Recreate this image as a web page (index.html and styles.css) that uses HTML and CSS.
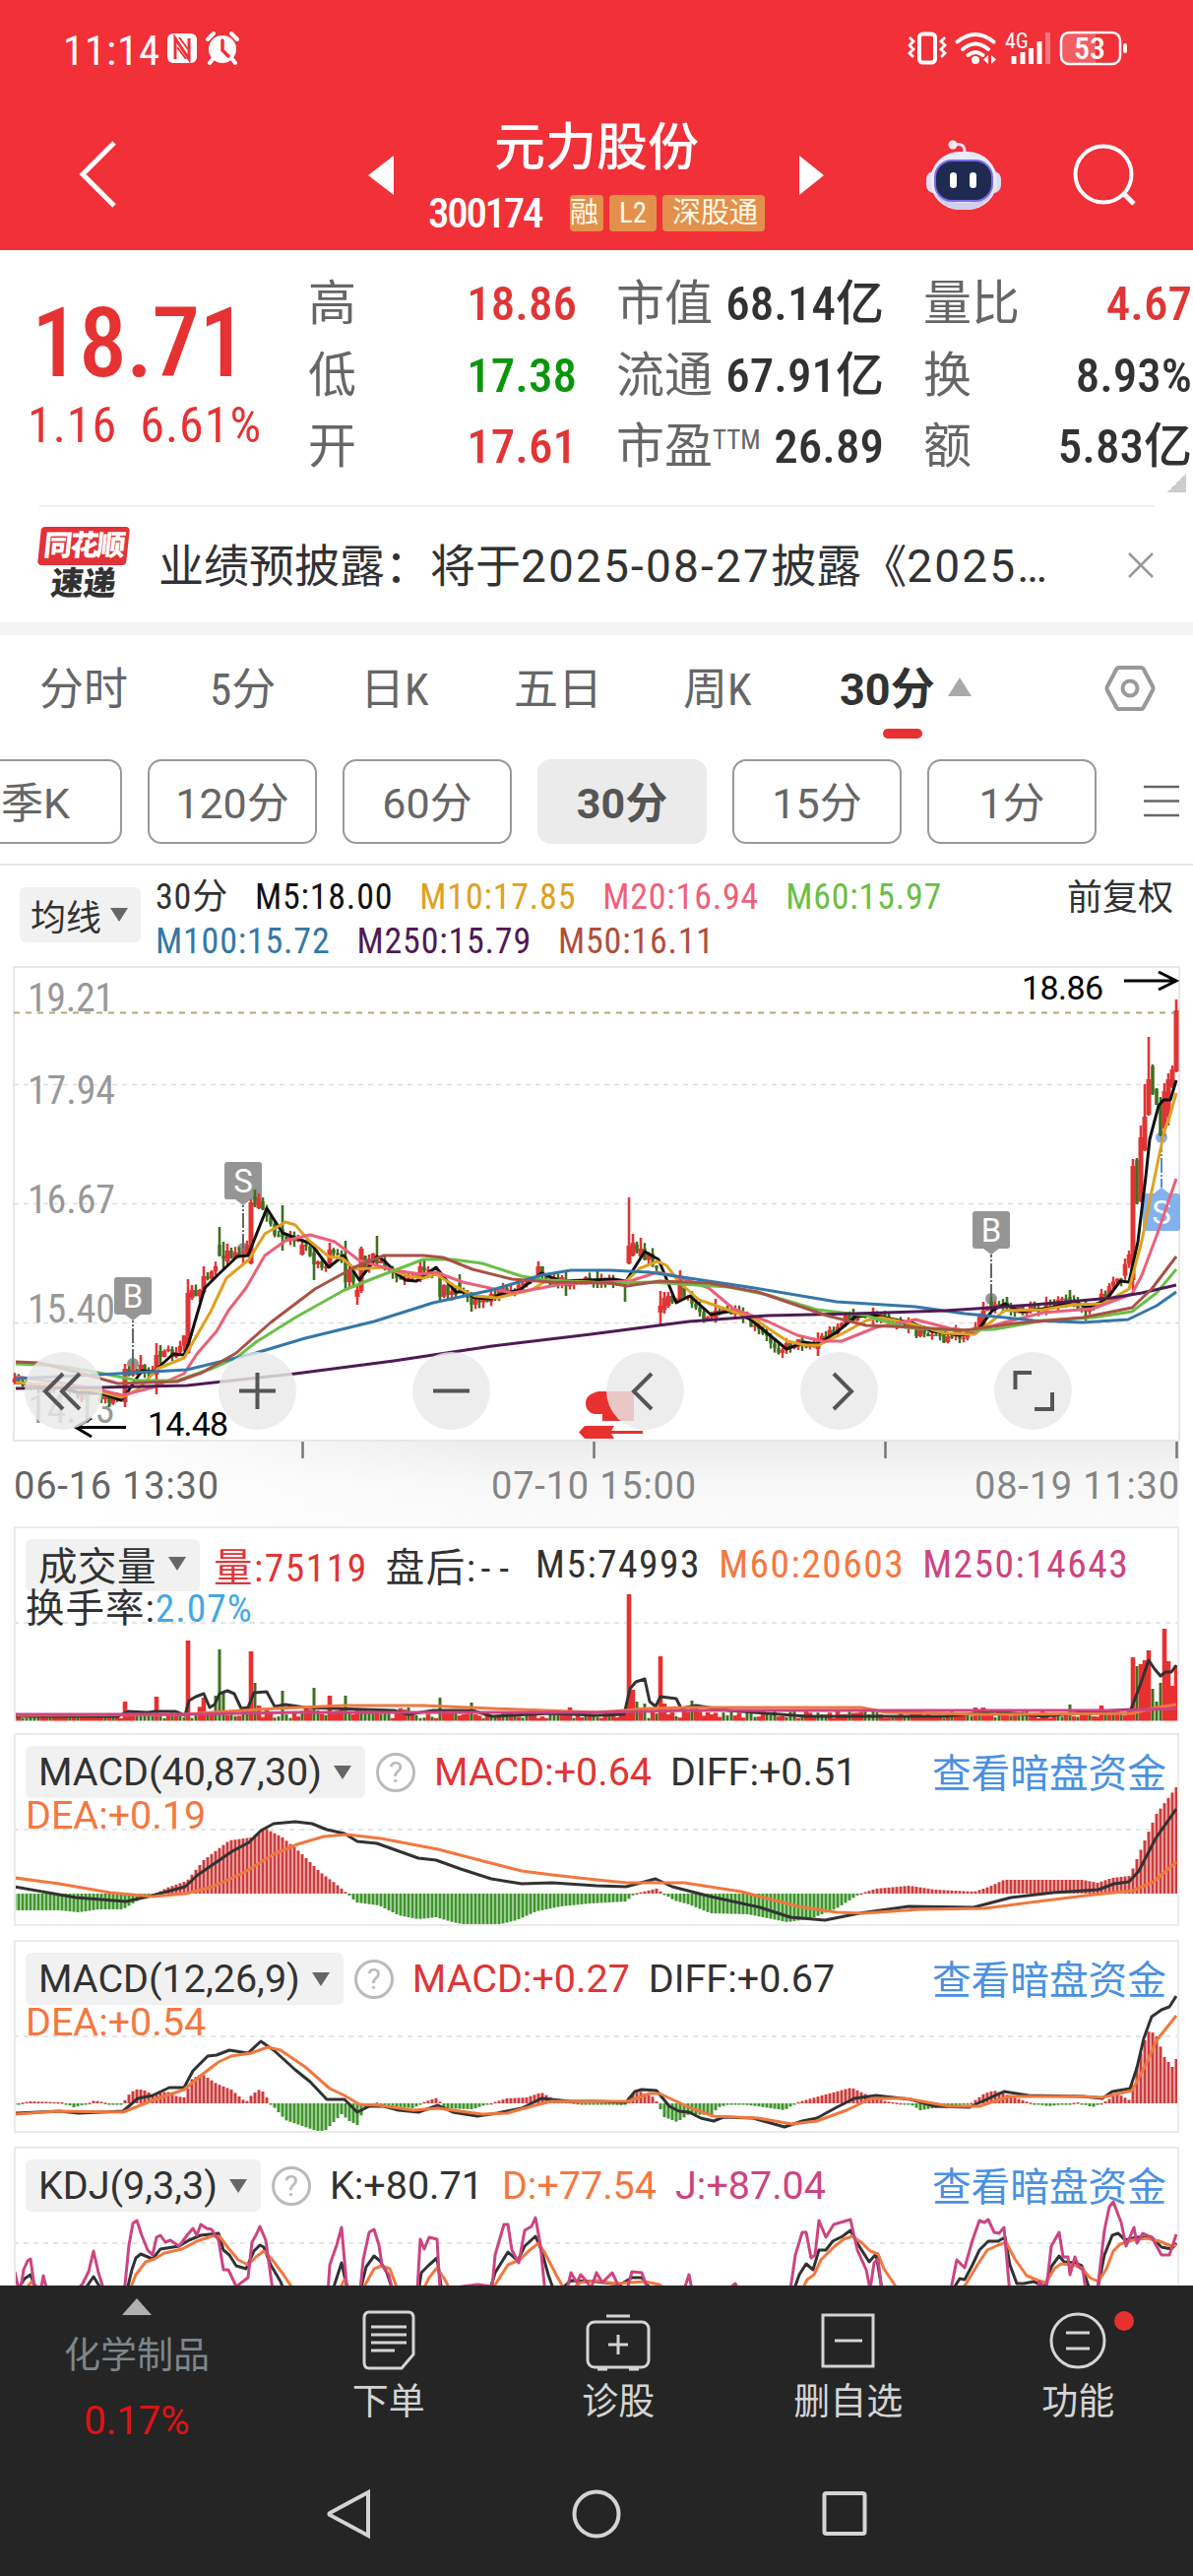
FILE: index.html
```html
<!DOCTYPE html>
<html lang="zh-CN">

<head>
  <meta charset="UTF-8">
  <meta name="viewport" content="width=device-width, initial-scale=1.0">
  <title>元力股份 300174</title>
  <link rel="stylesheet" href="styles.css">
</head>

<body>
  <header class="header">
    <div class="status">
      <span class="time">11:14</span>
      <svg class="nfc" width="30" height="32" viewBox="0 0 30 32">
        <rect x="0" y="1" width="30" height="30" rx="6" fill="#fff" />
        <path d="M8 27V6l14 21V6" fill="none" stroke="#f13037" stroke-width="3" />
        <path d="M10 15l9 12M12 5l9 12" stroke="#f13037" stroke-width="2" />
      </svg>
      <svg class="alarm" width="34" height="34" viewBox="0 0 34 34">
        <circle cx="17" cy="18" r="14" fill="#fff" />
        <path d="M2 8l6-6M32 8l-6-6M7 28l-3 4M27 28l3 4" stroke="#fff" stroke-width="4" stroke-linecap="round" />
        <path d="M17 9v10l6 6" fill="none" stroke="#f13037" stroke-width="3.500" stroke-linecap="round" />
      </svg>
      <svg class="signals" width="226" height="54" viewBox="920 22 226 54">
        <rect x="934" y="34.500" width="16" height="29" rx="3.500" fill="none" stroke="#fff" stroke-width="4" />
        <path d="M924 38l4 4-4 4 4 4-4 4 4 4M960 38l-4 4 4 4-4 4 4 4-4 4" fill="none" stroke="#fff" stroke-width="2.800" />
        <path d="M972.500 42.500q18.500-15 37 0M978 50q13-11 26 0M983.500 56q7.500-6 15 0" fill="none" stroke="#fff" stroke-width="4" stroke-linecap="round" />
        <circle cx="991" cy="61" r="4" fill="#fff" />
        <path d="M1004 56v9l-5-4.500zM1007 56v9l5-4.500z" fill="#fff" />
        <text class="net" x="1021" y="49">4G</text>
        <path d="M1030 65V57M1039 65V53M1047.500 65V49M1056 65V42" stroke="#fff" stroke-width="5" />
        <path d="M1064.500 65V33" stroke="#fff" stroke-opacity=".35" stroke-width="5" />
        <path d="M1086 33h27v31h-27q-7 0-7-8V41q0-8 7-8z" fill="#fff" fill-opacity=".22" />
        <rect x="1078" y="33" width="60" height="32" rx="8" fill="none" stroke="#fff" stroke-width="2.500" />
        <rect x="1141" y="44" width="4" height="10" rx="2" fill="#fff" />
        <text class="battery" x="1091" y="60">53</text>
      </svg>
    </div>
    <div class="titlebar">
      <svg class="back" width="44" height="70" viewBox="0 0 44 70"><path d="M38 4L6 36l32 32" fill="none" stroke="#fff" stroke-width="5" /></svg>
      <svg class="prev" width="26" height="40" viewBox="0 0 26 40"><path d="M26 0v40L0 20z" fill="#fff" /></svg>
      <div class="title">
        <h1>元力股份</h1>
        <div class="code"><b>300174</b><i class="cut">融</i><i>L2</i><i class="last">深股通</i></div>
      </div>
      <svg class="next" width="26" height="40" viewBox="0 0 26 40"><path d="M0 0v40l25-20z" fill="#fff" /></svg>
      <svg class="robot" width="76" height="72" viewBox="0 0 76 72">
        <path d="M28 5q12-3 11 9" fill="none" stroke="#e9dff5" stroke-width="3" />
        <circle cx="27" cy="5" r="4.500" fill="#f5e8f5" />
        <rect x="0" y="32" width="76" height="22" rx="8" fill="#dfdcf3" />
        <rect x="4" y="12" width="68" height="59" rx="30" fill="#eceaf8" />
        <path d="M8 54q10 17 30 17t30-17q-12 10-30 10T8 54z" fill="#cfcdf0" />
        <rect x="9" y="21" width="58" height="41" rx="17" fill="#1e2a50" stroke="#7b6be6" stroke-width="2" />
        <rect x="24" y="33" width="7" height="16" rx="3.500" fill="#fff" />
        <rect x="44" y="33" width="7" height="16" rx="3.500" fill="#fff" />
      </svg>
      <svg class="search" width="66" height="66" viewBox="0 0 66 66"><circle cx="31" cy="32" r="28.500" fill="none" stroke="#fff" stroke-width="4" /><path d="M51 51l11 11" stroke="#fff" stroke-width="5" /></svg>
    </div>
  </header>

  <section class="quote">
    <div class="price">
      <div class="now">18.71</div>
      <div class="change"><span>1.16</span><span>6.61%</span></div>
    </div>
    <dl class="stats">
      <div><dt>高</dt><dd class="up">18.86</dd></div>
      <div><dt>市值</dt><dd>68.14亿</dd></div>
      <div><dt>量比</dt><dd class="up">4.67</dd></div>
      <div><dt>低</dt><dd class="down">17.38</dd></div>
      <div><dt>流通</dt><dd>67.91亿</dd></div>
      <div><dt>换</dt><dd>8.93%</dd></div>
      <div><dt>开</dt><dd class="up">17.61</dd></div>
      <div><dt>市盈<sup>TTM</sup></dt><dd>26.89</dd></div>
      <div><dt>额</dt><dd>5.83亿</dd></div>
    </dl>
    <span class="corner"></span>
  </section>

  <section class="news">
    <div class="logo"><b>同花顺</b><em>速递</em></div>
    <p>业绩预披露：将于<span>2025-08-27</span>披露《<span>2025…</span></p>
    <svg width="26" height="26" viewBox="0 0 26 26"><path d="M1 1l24 24M25 1L1 25" stroke="#999" stroke-width="2.500" /></svg>
  </section>

  <nav class="tabs">
    <a>分时</a><a>5分</a><a>日K</a><a>五日</a><a>周K</a><a class="on">30分</a>
    <svg width="52" height="48" viewBox="0 0 52 48"><path d="M15 3h22q2 0 3 2l9 17q1 2 0 4l-9 17q-1 2-3 2H15q-2 0-3-2L3 26q-1-2 0-4l9-17q1-2 3-2z" fill="none" stroke="#999" stroke-width="4" /><circle cx="26" cy="24" r="7.500" fill="none" stroke="#999" stroke-width="4" /></svg>
  </nav>
  <div class="periods">
    <button>季K</button><button>120分</button><button>60分</button><button class="on">30分</button><button>15分</button><button>1分</button>
    <svg width="36" height="34" viewBox="0 0 36 34"><path d="M0 2h36M0 16.500h36M0 31h36" stroke="#666" stroke-width="2.500" /></svg>
  </div>

  <section class="ma">
    <span class="chip">均线</span>
    <div class="legend">
      <p><span>30分</span><span class="m5">M5:18.00</span><span class="m10">M10:17.85</span><span class="m20">M20:16.94</span><span class="m60">M60:15.97</span></p>
      <p><span class="m100">M100:15.72</span><span class="m250">M250:15.79</span><span class="m50">M50:16.11</span></p>
    </div>
    <span class="adjust">前复权</span>
  </section>

  <section class="kline">
    <svg width="1212" height="576" viewBox="0 974 1212 576">
      <defs>
        <linearGradient id="shade" x1="0" x2="0" y1="0" y2="1">
          <stop offset="0" stop-color="#ececec" />
          <stop offset=".5" stop-color="#f8f8f8" />
          <stop offset="1" stop-color="#fbfbfb" />
        </linearGradient>
        <linearGradient id="fade" x1="0" x2="1" y1="0" y2="0">
          <stop offset="0" stop-color="#fff" />
          <stop offset="1" stop-color="#fff" stop-opacity="0" />
        </linearGradient>
      </defs>
      <rect x="100" y="1464" width="1098" height="86" fill="url(#shade)" />
      <rect x="100" y="1464" width="400" height="86" fill="url(#fade)" />
      <rect class="frame" x="14" y="982" width="1184" height="481" />
      <path class="grid" d="M14 1101.500H1198M14 1222.500H1198M14 1343.500H1198" />
      <path class="last-price" d="M14 1028.500H1198" />
      <g class="scale">
        <text x="28" y="1027" textLength="88">19.21</text>
        <text x="28" y="1120.500" textLength="89">17.94</text>
        <text x="28" y="1231.500" textLength="89">16.67</text>
        <text x="28" y="1342.500" textLength="89">15.40</text>
        <text x="28" y="1444.500" textLength="89">14.13</text>
      </g>
      <g id="marks"></g>
      <g id="candles"></g>
      <g id="averages"></g>
      <g fill="#e8302f">
        <path d="M608 1413H644v30H612v-7H604q-9-2-9-11t13-12z" />
        <path d="M588 1454.500l6-6.500h30l-3 5h32v3h-32l3 5h-30z" />
      </g>
      <path d="M128 1449.500H78M93 1440l-16 9.500 16 9.500M1142 996H1194M1177 987l18 9-18 9" fill="none" stroke="#000" stroke-width="3" />
      <g class="extreme">
        <text x="150" y="1458" textLength="82">14.48</text>
        <text x="1038" y="1015" textLength="83">18.86</text>
      </g>
      <g class="tool-bg">
        <circle cx="64.500" cy="1412.500" r="39.500" /><circle cx="261.500" cy="1412.500" r="39.500" /><circle cx="458.500" cy="1412.500" r="39.500" />
        <circle cx="655.500" cy="1412.500" r="39.500" /><circle cx="852.500" cy="1412.500" r="39.500" /><circle cx="1049.500" cy="1412.500" r="39.500" />
      </g>
      <path class="tool" d="M64 1395l-18 18 18 18M81 1395l-18 18 18 18M243 1412.500h37M261.500 1394v37M440 1412.500h37M662 1395l-18 18 18 18M847 1395l18 18-18 18M1031.500 1411v-17H1048M1069 1414v17H1051" />
      <path d="M307.500 1464v17M603.500 1464v17M899.500 1464v17M1195.500 1464v17" stroke="#777" stroke-width="2.500" />
      <g class="dates">
        <text class="first" x="14" y="1522" textLength="208">06-16 13:30</text>
        <text x="499" y="1522" textLength="208">07-10 15:00</text>
        <text x="990" y="1522" textLength="208">08-19 11:30</text>
      </g>
    </svg>
  </section>

  <section class="panel volume">
    <svg id="volume" width="1184" height="198" viewBox="14 1550 1184 198"></svg>
    <div class="info">
      <p><span class="chip">成交量</span><span class="up">量:75119</span><span class="after">盘后:<span>--</span></span><span>M5:74993</span><span class="orange">M60:20603</span><span class="pink">M250:14643</span></p>
      <p><span>换手率:<span class="sky">2.07%</span></span></p>
    </div>
  </section>
  <section class="panel">
    <svg id="macd1" width="1184" height="196" viewBox="14 1760 1184 196"></svg>
    <div class="info">
      <p><span class="chip">MACD(40,87,30)</span><span class="help">?</span><span class="up">MACD:+0.64</span><span>DIFF:+0.51</span><a>查看暗盘资金</a></p>
      <p><span class="orange">DEA:+0.19</span></p>
    </div>
  </section>
  <section class="panel">
    <svg id="macd2" width="1184" height="196" viewBox="14 1970 1184 196"></svg>
    <div class="info">
      <p><span class="chip">MACD(12,26,9)</span><span class="help">?</span><span class="up">MACD:+0.27</span><span>DIFF:+0.67</span><a>查看暗盘资金</a></p>
      <p><span class="orange">DEA:+0.54</span></p>
    </div>
  </section>
  <section class="panel kdj">
    <svg id="kdj" width="1184" height="141" viewBox="14 2180 1184 141"></svg>
    <div class="info">
      <p><span class="chip">KDJ(9,3,3)</span><span class="help">?</span><span>K:+80.71</span><span class="orange">D:+77.54</span><span class="pink">J:+87.04</span><a>查看暗盘资金</a></p>
    </div>
  </section>

  <footer class="footer">
    <div class="menu">
      <div class="sector"><span class="arrow"></span><span>化学制品</span><b>0.17%</b></div>
      <a><svg width="56" height="62" viewBox="0 0 56 62"><path d="M8 2h40q5 0 5 6v37l-12 14H8q-5 0-5-6V8q0-6 5-6z" /><path d="M10 17h36M10 25h36M10 33h36M10 41h24" /></svg>下单</a>
      <a><svg width="66" height="62" viewBox="0 0 66 62"><rect x="2" y="12" width="62" height="46" rx="7" /><path d="M21 6h24M23 35h20M33 25v20M12 60h10M44 60h10" /></svg>诊股</a>
      <a><svg width="56" height="62" viewBox="0 0 56 62"><rect x="2" y="5" width="51" height="52" /><path d="M14 31h28" /></svg>删自选</a>
      <a><svg width="58" height="62" viewBox="0 0 58 62"><circle cx="29" cy="31" r="27" /><path d="M17 23h24M17 39h24" /></svg>功能<span class="dot"></span></a>
    </div>
    <div class="system">
      <svg width="46" height="54" viewBox="0 0 46 54"><path d="M43 5v44L4 28q-1-1 0-2z" /></svg>
      <svg width="54" height="54" viewBox="0 0 54 54"><circle cx="27" cy="27" r="22.500" /></svg>
      <svg width="46" height="54" viewBox="0 0 46 54"><rect x="2.500" y="6" width="41" height="41" rx="2" /></svg>
    </div>
  </footer>

  <script src="chart.js"></script>
</body>

</html>
```

FILE: styles.css
```css
* {
  box-sizing: border-box;
}

body {
  margin: 0;
  width: 1212px;
  height: 2616px;
  overflow: hidden;
  background-color: #fff;
  color: #323232;
  font-family: Roboto, "Noto Sans CJK SC", sans-serif;
  font-stretch: 85%;
}

h1, p, dl, dd {
  margin: 0;
}

i, em {
  font-style: normal;
}

.up {
  color: #e03535;
}

.down {
  color: #0a960a;
}

.orange {
  color: #f4783f;
}

.pink {
  color: #cc4480;
}

.sky {
  color: #45a8e6;
}

.header {
  height: 254px;
  background-color: #f13037;
  color: #fff;
}

.status {
  display: flex;
  align-items: center;
  height: 98px;
  padding-left: 64px;
}

.time {
  width: 106px;
  padding-top: 3px;
  font-size: 43px;
  letter-spacing: .8px;
}

.alarm {
  margin-left: 9px;
}

.signals {
  margin-left: 677px;
}

.net {
  font-size: 22px;
  fill: #fff;
}

.battery {
  font-size: 32px;
  font-weight: 500;
  fill: #fff;
}

.titlebar {
  display: flex;
  align-items: center;
  height: 156px;
  padding-left: 78px;
}

.prev {
  margin-left: 252px;
  margin-top: 4px;
}

.title {
  width: 360px;
  margin: 0 26px;
  padding-left: 9px;
}

.title h1 {
  margin-top: -9px;
  padding-left: 67px;
  font-size: 52px;
  font-weight: 500;
  line-height: 84px;
  white-space: nowrap;
}

.code {
  display: flex;
  align-items: center;
  height: 37px;
  margin-top: 5px;
}

.code b {
  width: 144px;
  font-size: 43px;
  font-weight: 500;
  letter-spacing: -2.300px;
}

.code i {
  height: 37px;
  margin-right: 6px;
  padding: 0 10px;
  border-radius: 4px;
  background-color: #e3904c;
  color: #fff8e6;
  font-size: 29px;
  line-height: 36px;
  white-space: nowrap;
}

.code .cut {
  width: 34px;
  padding: 0;
}

.code .last {
  margin-right: 0;
  padding-right: 7px;
}

.next {
  margin-left: 0;
  margin-top: 4px;
}

.robot {
  margin-left: 103px;
  margin-top: 3px;
}

.search {
  margin-left: 73px;
  margin-top: 4px;
}

.quote {
  position: relative;
  display: flex;
  height: 261px;
  padding-top: 19px;
}

.quote::after {
  content: "";
  position: absolute;
  left: 40px;
  right: 40px;
  bottom: 0;
  border-bottom: 2px solid #eee;
}

.price {
  width: 313px;
  color: #e63232;
}

.now {
  padding: 18px 0 0 32px;
  font-size: 98px;
  font-weight: 500;
  line-height: 116px;
  letter-spacing: -1px;
}

.change {
  display: flex;
  gap: 23px;
  padding-left: 28px;
  font-size: 50px;
  line-height: 50px;
  letter-spacing: 1px;
}

.stats {
  flex: 1;
  display: grid;
  grid-template-columns: 273px 272px 273px;
  column-gap: 40px;
  grid-template-rows: repeat(3, 72.500px);
  font-size: 49px;
  line-height: 72px;
}

.stats div {
  display: flex;
  justify-content: space-between;
  white-space: nowrap;
}

.stats dt {
  color: #666;
}

.stats dd {
  font-weight: 500;
}

.stats sup {
  font-size: 27px;
  line-height: 0;
  vertical-align: 14px;
}

.corner {
  position: absolute;
  right: 7px;
  bottom: 15px;
  width: 19px;
  height: 19px;
  background: linear-gradient(135deg, transparent 50%, #ccc 50%);
}

.news {
  display: flex;
  align-items: center;
  height: 130px;
  padding: 0 40px;
  border-bottom: 13px solid #f4f4f4;
}

.logo {
  width: 121px;
}

.logo b, .logo em {
  display: block;
  width: 90px;
  transform: skewX(-6deg);
  font-size: 29px;
  font-weight: 900;
  line-height: 39px;
  text-align: center;
}

.logo b {
  border-radius: 4px;
  background-color: #e23238;
  color: #fff;
  letter-spacing: -2px;
}

.logo em {
  font-size: 33px;
  line-height: 38px;
}

.news p {
  width: 986px;
  padding-bottom: 6px;
  font-size: 46px;
  white-space: nowrap;
}

.news p span {
  font-stretch: 100%;
  letter-spacing: 2.200px;
}

.tabs {
  display: flex;
  align-items: center;
  height: 108px;
  padding-left: 40px;
  color: #666;
  font-size: 45px;
  white-space: nowrap;
}

.tabs a {
  padding-bottom: 5px;
}

.tabs a:nth-child(1) { width: 173px; }
.tabs a:nth-child(2) { width: 153px; }
.tabs a:nth-child(3) { width: 156px; }
.tabs a:nth-child(4) { width: 172px; }
.tabs a:nth-child(5) { width: 159px; }

.tabs .on {
  position: relative;
  width: 269px;
  color: #323232;
  font-stretch: 100%;
  font-weight: 700;
}

.tabs .on::before {
  content: "";
  position: absolute;
  left: 110px;
  top: 24px;
  border: 12px solid transparent;
  border-top-width: 0;
  border-bottom: 19px solid #aaa;
}

.tabs .on::after {
  content: "";
  position: absolute;
  left: 44px;
  top: 76px;
  width: 40px;
  height: 10px;
  border-radius: 5px;
  background-color: #e63232;
}

.periods {
  display: flex;
  align-items: center;
  gap: 26px;
  height: 126px;
  padding-bottom: 3px;
  margin-left: -48px;
  border-bottom: 2px solid #e8e8e8;
}

.periods button {
  flex: none;
  width: 172px;
  height: 86px;
  padding: 0 0 3px;
  border: 2px solid #999;
  border-radius: 14px;
  background-color: #fff;
  color: #666;
  font: inherit;
  font-size: 43px;
  font-stretch: 100%;
}

.periods button:first-child {
  padding-right: 4px;
}

.periods .on {
  border-color: #ebebeb;
  background-color: #ebebeb;
  color: #555;
  font-weight: 700;
}

.periods svg {
  margin-left: 22px;
}

.chip {
  display: inline-flex;
  align-items: center;
  border-radius: 6px;
  background-color: #f1f1f1;
  white-space: nowrap;
}

.chip::after {
  content: "";
  margin-left: 12px;
  border: 9px solid transparent;
  border-top: 14px solid #666;
  border-bottom-width: 0;
}

.ma {
  display: flex;
  height: 95px;
  padding-left: 20px;
  font-size: 36px;
}

.ma .chip {
  width: 123px;
  height: 56px;
  margin-top: 22px;
  padding-left: 11px;
}

.ma .chip::after {
  margin-left: 9px;
}

.legend {
  width: 941px;
  padding: 10px 0 0 15px;
  letter-spacing: .800px;
}

.legend p {
  display: flex;
  gap: 27px;
  line-height: 45px;
  white-space: nowrap;
}

.m5 { color: #111; }
.m10 { color: #e0a020; }
.m20 { color: #f06078; }
.m60 { color: #6abf47; }
.m100 { color: #3477a8; }
.m250 { color: #4f1a55; }
.m50 { color: #b04e3c; }

.adjust {
  padding-top: 11px;
  line-height: 45px;
}

.kline svg, .panel svg {
  display: block;
}

.kline {
  height: 576px;
}

.frame {
  fill: none;
  stroke: #e8e8e8;
  stroke-width: 2;
}

.grid {
  fill: none;
  stroke: #ddd;
  stroke-width: 1.500;
  stroke-dasharray: 5 5;
}

.last-price {
  stroke: #b3a878;
  stroke-width: 2;
  stroke-dasharray: 6 6;
}

.scale {
  fill: #999;
  font-size: 40px;
}

.extreme {
  fill: #000;
  font-size: 34px;
  font-stretch: 100%;
}

.dates {
  fill: #858585;
  font-size: 38px;
  font-stretch: 100%;
}

.dates .first {
  fill: #666;
}

.tool-bg {
  fill: #e9e9e9;
  fill-opacity: .82;
}

.tool {
  fill: none;
  stroke: #555;
  stroke-width: 4;
}

.flag {
  fill: #fff;
  font-size: 33px;
  font-stretch: 100%;
  text-anchor: middle;
}

.line {
  fill: none;
  stroke-width: 3;
  stroke-linejoin: round;
}

.panel {
  display: grid;
  width: 1184px;
  height: 196px;
  margin: 0 14px 14px;
  border: 2px solid #ebebeb;
  overflow: hidden;
}

.panel > * {
  grid-area: 1 / 1;
}

.panel svg {
  margin: -2px;
}

.volume {
  height: 198px;
  margin-bottom: 12px;
  border-bottom: 0;
}

.kdj {
  height: 141px;
  margin-bottom: 0;
  border-bottom: 0;
}

.info {
  z-index: 1;
  font-size: 39.500px;
  font-stretch: 100%;
}

.info p {
  display: flex;
  align-items: center;
  height: 53px;
  padding-left: 10px;
  white-space: nowrap;
}

.info p:first-child {
  gap: 19px;
  padding-top: 13px;
  height: 62px;
}

.info p + p {
  height: 38px;
}

.info .chip {
  height: 53px;
  margin-right: -8px;
  padding: 0 14px 0 13px;
}

.info .help {
  width: 40px;
  height: 40px;
  border: 3px solid #bbb;
  border-radius: 50%;
  color: #bbb;
  font-size: 30px;
  line-height: 34px;
  text-align: center;
}

.info a {
  margin-left: auto;
  margin-right: 11px;
  padding-bottom: 4px;
  color: #4a90e2;
  font-size: 39.700px;
}

.volume .info {
  font-stretch: 85%;
  letter-spacing: 1.500px;
}

.volume .info p:first-child {
  gap: 18px;
}

.volume .info .chip {
  margin-right: -4px;
  padding-bottom: 4px;
  letter-spacing: .5px;
}

.volume .info p > span {
  padding-bottom: 3px;
}

.volume .info p + p {
  height: 34px;
  letter-spacing: 1px;
}

.after > span {
  margin-left: 4px;
  letter-spacing: 9px;
}

.footer {
  height: 295px;
  background-color: #252525;
  color: #d4d4d4;
  font-size: 37px;
}

.menu {
  display: flex;
  height: 180px;
}

.menu a {
  position: relative;
  display: flex;
  flex: 1;
  flex-direction: column;
  align-items: center;
  padding-top: 25px;
  line-height: 64px;
}

.menu svg, .system svg {
  fill: none;
  stroke: #d4d4d4;
  stroke-width: 3;
}

.menu svg {
  flex: none;
}

.sector {
  display: flex;
  flex-direction: column;
  align-items: center;
  width: 278px;
  padding-top: 13px;
  color: #7d868c;
  line-height: 66px;
}

.sector .arrow {
  margin-bottom: 9px;
  border: 15px solid transparent;
  border-top-width: 0;
  border-bottom: 17px solid #b0b0b0;
}

.sector b {
  color: #e01212;
  font-size: 40px;
  font-stretch: 100%;
  font-weight: 400;
}

.dot {
  position: absolute;
  left: 153px;
  top: 26px;
  width: 20px;
  height: 20px;
  border-radius: 50%;
  background-color: #e93030;
}

.system {
  display: flex;
  justify-content: center;
  gap: 202px;
  padding-top: 25px;
}

.system svg {
  stroke-width: 4;
}
```

FILE: chart.js
```js
const STEP = 4
const LEFT = 16
const COUNT = 296
const RED = '#e03535'
const GREEN = '#3f7020'

// small deterministic generator, so that the chart is the same on each load
let seed = 7
function rand() {
  seed = (seed * 16807) % 2147483647
  return seed / 2147483647
}

function parse(s) {
  return s.trim().split(/\s+/).map(p => p.split(',').map(Number))
}

function at(points, x) {
  if (x <= points[0][0]) return points[0][1]
  for (let i = 1; i < points.length; i++) {
    const [x0, y0] = points[i - 1]
    const [x1, y1] = points[i]
    if (x <= x1) return y0 + (y1 - y0) * (x - x0) / (x1 - x0)
  }
  return points[points.length - 1][1]
}

function line(points, color) {
  return `<polyline class="line" stroke="${color}" points="${points.join(' ')}"/>`
}

function bar(x, y0, y1, w, color) {
  return `<rect x="${x - w / 2}" y="${Math.min(y0, y1)}" width="${w}" height="${Math.max(1.5, Math.abs(y1 - y0))}" fill="${color}"/>`
}

const ma = {
  m5: parse('16,1404 59,1409 80,1414 103,1415 123,1422 130,1413 144,1392 156,1393 176,1375 187,1376 192,1363 208,1308 221,1295 241,1276 252,1275 271,1227 287,1252 300,1257 316,1263 334,1287 349,1275 365,1300 383,1276 390,1280 403,1293 412,1300 423,1301 443,1287 463,1312 474,1312 482,1318 498,1319 510,1314 528,1310 550,1293 569,1301 623,1299 636,1301 655,1271 669,1279 687,1323 701,1316 722,1335 746,1331 764,1341 799,1370 817,1363 830,1365 850,1353 869,1337 889,1336 928,1344 947,1352 975,1356 992,1353 1008,1331 1021,1324 1037,1332 1068,1328 1092,1321 1103,1328 1123,1321 1138,1301 1147,1302 1156,1261 1164,1195 1168,1157 1177,1123 1182,1117 1189,1117 1195,1097'),
  m10: parse('16,1404 60,1407 100,1413 124,1419 140,1411 160,1390 187,1379 196,1363 214,1332 230,1298 253,1279 269,1253 290,1241 300,1244 313,1259 334,1276 348,1278 361,1289 390,1287 415,1296 430,1298 443,1294 462,1306 482,1316 505,1318 540,1310 556,1300 620,1303 636,1301 650,1288 668,1281 677,1285 690,1302 710,1320 745,1332 764,1338 800,1362 818,1366 832,1366 860,1352 880,1341 895,1338 925,1344 960,1354 990,1355 1010,1340 1020,1331 1060,1330 1090,1325 1120,1324 1147,1309 1160,1260 1170,1210 1183,1148 1188,1135 1195,1110'),
  m20: parse('16,1398 60,1404 100,1411 124,1417 155,1409 187,1395 200,1375 220,1352 232,1331 250,1308 269,1275 290,1260 315,1254 340,1261 365,1280 400,1290 428,1294 443,1292 470,1302 520,1313 550,1308 570,1304 620,1302 640,1301 668,1292 690,1297 720,1308 745,1329 780,1342 810,1356 835,1362 855,1362 890,1348 930,1340 965,1349 990,1352 1020,1343 1060,1333 1110,1329 1150,1314 1160,1295 1175,1255 1195,1197'),
  m60: parse('16,1385 60,1387 100,1394 140,1402 180,1402 215,1390 240,1379 260,1363 300,1338 350,1310 380,1298 430,1279 460,1279 490,1283 530,1296 560,1301 620,1303 660,1302 740,1307 780,1315 830,1330 880,1336 920,1348 970,1351 1010,1350 1060,1341 1110,1338 1150,1332 1175,1313 1195,1289'),
  m100: parse('16,1400 100,1396 190,1391 260,1374 310,1359 380,1342 440,1323 500,1310 550,1295 580,1290 620,1290 660,1292 760,1307 850,1322 930,1327 980,1334 1050,1341 1100,1343 1146,1340 1175,1326 1195,1312'),
  m250: parse('16,1410 100,1409 190,1407 300,1395 400,1382 500,1367 600,1355 700,1342 780,1336 870,1334 960,1331 1050,1325 1130,1318 1160,1313 1195,1305'),
  m50: parse('16,1383 40,1384 80,1394 120,1405 180,1403 205,1394 240,1374 275,1343 320,1309 360,1287 390,1275 430,1275 450,1277 480,1289 520,1299 560,1302 620,1303 637,1306 670,1301 720,1303 770,1312 840,1336 880,1346 930,1348 980,1351 1030,1344 1100,1338 1150,1328 1170,1309 1195,1276')
}

// x, high, open side, close side, low, rising
const bigCandles = [
  [127, 1385, 1390, 1424, 1429, 1], [143, 1376, 1386, 1394, 1396, 1],
  [159, 1364, 1376, 1396, 1416, 1], [163, 1366, 1372, 1378, 1385, 0],
  [191, 1299, 1313, 1374, 1375, 1], [195, 1305, 1310, 1318, 1320, 1],
  [207, 1286, 1296, 1312, 1314, 1], [223, 1246, 1264, 1275, 1276, 0],
  [227, 1261, 1275, 1278, 1288, 0], [231, 1263, 1270, 1281, 1284, 1],
  [255, 1218, 1221, 1283, 1284, 1], [259, 1208, 1215, 1224, 1226, 0],
  [263, 1212, 1217, 1227, 1228, 1], [267, 1216, 1220, 1228, 1229, 0],
  [287, 1224, 1248, 1256, 1270, 0], [307, 1259, 1264, 1274, 1275, 1],
  [319, 1264, 1272, 1284, 1300, 0], [335, 1262, 1269, 1286, 1288, 1],
  [351, 1260, 1276, 1302, 1311, 0], [363, 1306, 1310, 1317, 1325, 1],
  [367, 1266, 1268, 1311, 1313, 1], [383, 1255, 1275, 1283, 1286, 0],
  [427, 1281, 1286, 1300, 1302, 1], [431, 1278, 1287, 1290, 1293, 0],
  [447, 1294, 1297, 1317, 1320, 0], [467, 1294, 1303, 1310, 1312, 0],
  [479, 1312, 1316, 1325, 1332, 0], [547, 1281, 1286, 1297, 1299, 1],
  [575, 1291, 1300, 1306, 1316, 0], [607, 1291, 1300, 1304, 1308, 0],
  [635, 1300, 1303, 1307, 1322, 0], [639, 1216, 1265, 1283, 1284, 1],
  [643, 1253, 1262, 1275, 1276, 1], [647, 1261, 1264, 1271, 1273, 0],
  [651, 1257, 1268, 1276, 1278, 1], [671, 1311, 1326, 1333, 1345, 1],
  [675, 1312, 1318, 1330, 1334, 1], [679, 1312, 1316, 1326, 1328, 1],
  [691, 1290, 1297, 1320, 1322, 1], [695, 1303, 1308, 1317, 1318, 0],
  [727, 1319, 1331, 1338, 1343, 1], [831, 1353, 1360, 1370, 1377, 1],
  [867, 1329, 1334, 1341, 1343, 0], [887, 1328, 1333, 1339, 1345, 1],
  [931, 1345, 1346, 1357, 1359, 0], [959, 1351, 1354, 1363, 1364, 0],
  [999, 1322, 1331, 1348, 1350, 1], [1007, 1317, 1322, 1330, 1331, 0],
  [1023, 1317, 1322, 1328, 1332, 0], [1087, 1310, 1317, 1321, 1324, 0],
  [1103, 1321, 1326, 1332, 1341, 0], [1151, 1177, 1184, 1300, 1310, 1],
  [1155, 1176, 1178, 1222, 1223, 0], [1159, 1143, 1155, 1220, 1221, 1],
  [1163, 1101, 1134, 1168, 1169, 1], [1167, 1053, 1096, 1132, 1133, 1],
  [1171, 1081, 1083, 1111, 1112, 0], [1175, 1105, 1106, 1122, 1122, 0],
  [1179, 1114, 1120, 1153, 1154, 0], [1183, 1100, 1108, 1146, 1154, 1],
  [1187, 1090, 1096, 1134, 1143, 1], [1191, 1082, 1086, 1104, 1105, 1],
  [1195, 1015, 1026, 1088, 1089, 1]
]

function candles() {
  let out = ''
  let close = at(ma.m5, LEFT)
  for (let i = 0; i < COUNT; i++) {
    const x = 15 + i * STEP
    const big = bigCandles.find(c => c[0] === x)
    if (big) {
      const color = big[5] ? RED : GREEN
      out += bar(x, big[1], big[4], 2.6, color) + bar(x, big[2], big[3], big[5] ? 5 : 3.4, color)
      close = big[5] ? big[2] : big[3]
      continue
    }
    const next = at(ma.m5, x + 7) + (rand() - .5) * 10
    const rising = next <= close
    const color = rising ? RED : GREEN
    const open = Math.max(next - 12, Math.min(next + 12, close))
    out += bar(x, Math.min(open, next) - rand() * 6, Math.max(open, next) + rand() * 6, 2.4, color)
    out += bar(x, open, next, rising ? 4.6 : 3.4, color)
    close = next
  }
  return out
}

function flag(letter, x, y, tip, color) {
  const up = tip < y
  const edge = up ? y : y + 38
  const point = up ? y - 6 : y + 44
  return `<circle cx="${x}" cy="${tip}" r="6" fill="${color}"/>
    <path d="M${x} ${tip}V${point}" stroke="${up ? '#4a8de0' : '#666'}" stroke-width="2" stroke-dasharray="15 2 2 2"/>
    <path d="M${x - 8} ${edge}L${x} ${point}L${x + 8} ${edge}" fill="${color}"/>
    <rect x="${x - 19}" y="${y}" width="38" height="38" rx="3" fill="${color}"/>
    <text class="flag" x="${x}" y="${y + 31}">${letter}</text>`
}

document.getElementById('marks').innerHTML =
  flag('B', 135, 1297, 1385, '#959595') +
  flag('S', 247, 1180, 1268, '#959595') +
  flag('B', 1007, 1230, 1319, '#959595') +
  flag('S', 1180, 1212, 1155, '#82b1f0')
document.getElementById('candles').innerHTML = candles()
document.getElementById('averages').innerHTML =
  line(ma.m5, '#111') + line(ma.m10, '#e0a020') + line(ma.m20, '#ea6079') +
  line(ma.m60, '#6abf47') + line(ma.m100, '#3477a8') + line(ma.m250, '#4f1a55') + line(ma.m50, '#a85244')

// volume
const peaks = {
  127: [1728, 1], 159: [1723, 1], 191: [1666, 1], 207: [1724, 1], 219: [1722, 0], 223: [1675, 0], 227: [1718, 0],
  255: [1677, 1], 259: [1709, 0], 263: [1732, 1], 287: [1717, 0], 319: [1714, 0], 335: [1722, 1], 351: [1722, 0],
  415: [1734, 0], 447: [1724, 0], 479: [1729, 0], 543: [1735, 1], 579: [1734, 1], 639: [1619, 1], 643: [1716, 1], 647: [1728, 0],
  651: [1734, 1], 655: [1730, 0], 671: [1682, 1], 675: [1730, 1], 703: [1727, 0], 707: [1734, 1],
  991: [1734, 1], 999: [1734, 1], 1087: [1731, 0], 1119: [1732, 1],
  1151: [1683, 1], 1155: [1692, 0], 1159: [1690, 1], 1163: [1686, 1], 1167: [1676, 1], 1171: [1715, 0],
  1175: [1728, 0], 1179: [1709, 0], 1183: [1654, 1], 1187: [1687, 1], 1191: [1712, 1], 1195: [1691, 1]
}
let vol = '<path class="grid" d="M14 1648H1198"/>'
for (let i = 0; i < COUNT; i++) {
  const x = 15 + i * STEP
  const calm = x < 120 ? 5 : x > 200 && x < 420 ? 12 : 8
  const p = peaks[x] || [1747 - 2 - rand() * calm, rand() > .42]
  vol += bar(x, p[0], 1747.5, p[1] ? 4.6 : 3, p[1] ? '#e93030' : GREEN)
}
vol += line(parse('16,1743 120,1743 130,1738 150,1739 158,1738 178,1738 188,1742 192,1727 199,1723 207,1720 213,1734 218,1731 223,1720 231,1717 238,1720 245,1735 252,1734 258,1719 271,1718 279,1733 290,1731 310,1734 340,1735 400,1737 415,1741 440,1737 480,1737 500,1743 560,1740 606,1742 634,1741 640,1715 646,1708 655,1705 660,1728 666,1733 671,1723 687,1725 692,1735 707,1732 740,1737 820,1743 850,1743 910,1743 960,1743 1010,1738 1060,1743 1100,1739 1149,1736 1158,1712 1167,1686 1173,1695 1179,1702 1184,1698 1190,1698 1195,1691'), '#323232')
vol += line(parse('16,1742 187,1741 230,1738 280,1735 350,1732 430,1732 500,1735 606,1739 660,1735 700,1734 875,1734 900,1739 1000,1741 1150,1740 1175,1734 1195,1731'), '#f0783f')
vol += line(parse('16,1741 187,1741 300,1739 606,1739 700,1737 1140,1737 1195,1735'), '#cc4480')
document.getElementById('volume').innerHTML = vol

function macd(id, base, gridY, hist, diff, dea) {
  let out = `<path class="grid" d="M14 ${gridY}H1198"/>`
  for (let i = 0; i < COUNT; i++) {
    const x = 15 + i * STEP
    const h = at(hist, x)
    out += bar(x, base, base - h, 3, h > 0 ? '#cc3d3d' : '#3e962b')
  }
  document.getElementById(id).innerHTML = out + line(diff, '#323232') + line(dea, '#f0783f')
}

macd('macd1', 1923, 1858,
  parse('14,-17 60,-17 80,-19 100,-16 125,-16 140,-7 158,0 170,6 190,13 207,34 233,54 255,57 270,66 287,57 305,42 325,22 340,11 353,0 362,-9 385,-12 405,-22 425,-26 443,-24 460,-29 480,-33 500,-33 525,-27 545,-18 570,-13 600,-10 636,-8 645,0 667,5 674,0 685,-7 700,-11 722,-20 760,-21 785,-26 800,-29 825,-25 850,-15 874,0 890,5 924,8 950,4 990,2 1005,7 1020,14 1100,14 1115,11 1130,16 1148,18 1152,28 1163,54 1175,81 1195,108'),
  parse('15,1916 77,1927 128,1931 155,1925 188,1916 201,1904 236,1880 253,1871 265,1859 278,1852 300,1850 317,1852 332,1858 350,1862 363,1870 383,1872 425,1887 443,1889 468,1898 499,1908 530,1913 561,1912 606,1915 636,1916 666,1908 683,1916 722,1926 772,1937 803,1947 838,1950 873,1943 923,1936 989,1937 1027,1927 1070,1922 1116,1919 1132,1913 1147,1911 1157,1900 1174,1867 1195,1837'),
  parse('15,1907 60,1913 112,1922 155,1926 189,1923 216,1916 247,1902 278,1883 302,1873 329,1865 352,1863 387,1867 445,1878 491,1890 530,1900 561,1904 606,1909 637,1912 695,1912 753,1921 811,1936 850,1942 877,1943 935,1939 1000,1938 1054,1931 1112,1924 1151,1920 1172,1911 1195,1891'))

macd('macd2', 2136, 2068,
  parse('14,-1 30,2 65,1 75,-4 90,0 96,3 110,0 125,0 130,8 137,14 145,14 155,9 170,12 180,7 188,6 194,24 205,30 220,20 235,14 250,1 256,9 265,15 275,0 290,-17 310,-24 328,-30 336,-22 347,-11 355,-18 363,-22 370,-5 382,1 400,-3 420,-5 430,1 445,6 450,-5 480,-6 495,-1 515,5 535,6 550,11 565,3 590,0 634,-2 640,8 650,12 665,6 675,-14 688,-19 700,-11 722,-12 730,-4 745,0 770,-3 797,-7 810,1 835,8 865,16 880,9 900,2 925,-1 935,-7 960,-3 985,-1 1000,10 1010,13 1025,8 1045,1 1065,-3 1095,1 1110,-4 1125,3 1135,10 1148,3 1154,34 1163,64 1168,75 1175,68 1183,47 1191,37 1195,45'),
  parse('15,2146 60,2144 80,2146 125,2144 140,2131 155,2128 172,2120 187,2120 196,2103 211,2088 220,2087 233,2082 252,2085 265,2073 278,2082 300,2102 315,2114 332,2132 350,2132 363,2145 375,2139 390,2139 405,2143 425,2145 445,2138 460,2145 485,2149 505,2146 530,2141 550,2131 580,2134 606,2134 636,2135 645,2124 652,2122 667,2123 680,2139 690,2144 700,2145 712,2151 725,2154 735,2150 765,2151 797,2160 815,2154 830,2151 850,2140 868,2131 890,2128 925,2132 950,2139 985,2140 1000,2133 1020,2124 1045,2128 1100,2129 1120,2131 1130,2124 1148,2121 1155,2100 1162,2070 1170,2048 1180,2041 1188,2038 1195,2027'),
  parse('15,2147 60,2144 125,2145 155,2133 187,2122 205,2107 222,2094 235,2088 255,2085 272,2079 285,2082 310,2099 335,2121 350,2128 365,2137 385,2138 420,2143 445,2141 490,2147 515,2146 540,2139 560,2134 606,2134 638,2134 660,2126 670,2126 700,2140 725,2149 770,2151 805,2157 830,2154 860,2143 885,2131 920,2131 965,2139 995,2139 1025,2129 1100,2129 1120,2130 1150,2123 1165,2095 1175,2072 1195,2047'))

// KDJ
document.getElementById('kdj').innerHTML = '<path class="grid" d="M14 2278H1198"/>' +
  line(parse('15,2330 25,2314 31,2310 38,2328 86,2325 95,2312 103,2325 128,2330 134,2305 138,2293 143,2289 155,2294 163,2284 182,2281 192,2275 204,2270 222,2268 227,2285 233,2290 240,2301 250,2304 258,2286 264,2280 268,2282 275,2300 285,2317 292,2335 335,2335 347,2298 354,2330 365,2330 372,2302 380,2291 386,2296 393,2308 402,2335 424,2335 428,2308 436,2300 444,2293 450,2335 495,2335 503,2308 516,2287 526,2296 533,2281 544,2271 550,2285 557,2310 564,2330 580,2316 606,2317 630,2320 642,2313 652,2313 665,2330 805,2330 812,2310 819,2299 826,2305 832,2285 839,2285 846,2276 856,2271 864,2265 871,2278 883,2297 890,2289 896,2325 905,2340 965,2330 975,2314 980,2315 988,2300 995,2285 1004,2276 1014,2276 1021,2272 1026,2300 1033,2319 1040,2319 1050,2317 1062,2322 1068,2302 1076,2291 1081,2297 1092,2298 1099,2301 1107,2325 1115,2325 1122,2290 1130,2270 1136,2268 1143,2275 1155,2272 1170,2272 1180,2282 1190,2284 1195,2278'), '#323232') +
  line(parse('15,2340 32,2317 45,2330 130,2330 138,2310 148,2297 157,2294 167,2288 185,2284 200,2276 215,2271 223,2271 232,2283 242,2295 252,2300 260,2292 268,2286 276,2294 288,2310 300,2328 342,2330 350,2315 358,2330 370,2322 380,2304 388,2301 396,2304 404,2325 425,2335 436,2313 444,2303 452,2315 462,2335 500,2325 516,2300 528,2295 537,2286 547,2278 553,2287 565,2310 575,2328 590,2318 606,2316 625,2319 655,2317 670,2320 690,2340 810,2335 820,2315 827,2310 834,2295 847,2282 857,2274 866,2271 876,2278 884,2286 892,2289 898,2304 912,2325 965,2335 981,2320 993,2300 1003,2285 1014,2280 1022,2277 1031,2294 1043,2311 1055,2316 1063,2318 1071,2304 1078,2299 1090,2300 1099,2303 1107,2313 1116,2317 1124,2304 1131,2286 1138,2279 1150,2275 1165,2273 1178,2276 1190,2281 1195,2280'), '#f0783f') +
  line(parse('15,2307 20,2330 24,2305 28,2296 31,2294 36,2330 40,2335 44,2311 50,2335 70,2335 84,2319 90,2307 95,2286 100,2308 107,2330 126,2330 131,2280 135,2258 139,2255 144,2270 150,2285 155,2290 159,2272 163,2270 168,2277 173,2275 182,2281 190,2270 196,2263 200,2270 204,2259 210,2263 215,2264 222,2275 227,2305 232,2305 240,2322 252,2313 256,2277 260,2270 264,2261 270,2275 279,2340 333,2330 335,2300 342,2280 347,2262 353,2330 366,2325 369,2295 375,2267 380,2264 385,2280 388,2300 395,2310 401,2335 424,2325 427,2274 431,2284 436,2272 444,2274 447,2325 485,2320 500,2322 503,2290 512,2259 516,2259 520,2285 527,2298 533,2265 540,2261 544,2252 549,2280 554,2330 576,2325 580,2308 586,2318 590,2310 597,2318 600,2325 606,2308 612,2318 622,2308 630,2325 637,2325 642,2307 652,2308 658,2325 695,2325 700,2310 705,2335 740,2325 747,2319 755,2335 803,2325 808,2290 815,2267 819,2267 824,2293 828,2290 832,2255 839,2272 847,2259 864,2254 871,2285 880,2305 884,2325 888,2298 892,2294 897,2335 965,2330 972,2295 980,2303 988,2275 995,2255 1000,2257 1004,2254 1010,2267 1015,2268 1020,2262 1026,2330 1050,2335 1056,2317 1063,2325 1068,2281 1076,2267 1080,2292 1085,2292 1087,2310 1092,2292 1096,2302 1100,2305 1103,2325 1115,2325 1122,2265 1127,2241 1131,2236 1139,2257 1144,2281 1152,2262 1155,2278 1161,2268 1170,2272 1180,2290 1188,2290 1195,2269'), '#cc4480')
```
